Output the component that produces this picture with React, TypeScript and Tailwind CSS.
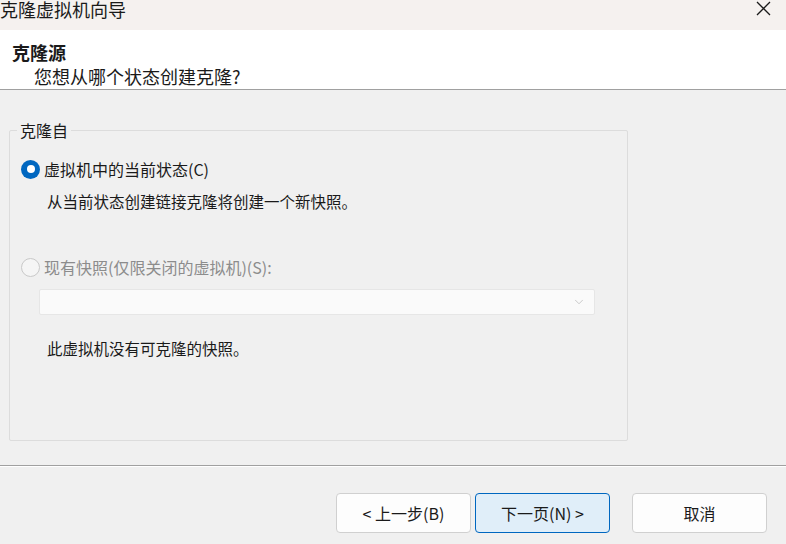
import {ChevronDown} from "lucide-react";

const font = {fontFamily: '"Noto Sans CJK SC", "Noto Sans", sans-serif'};

const Radio = ({checked, disabled}: {checked?: boolean; disabled?: boolean}) => {
    if (checked) {
        return (
            <span className="flex size-[19px] shrink-0 items-center justify-center rounded-full bg-[#0067c0]">
                <span className="size-[8px] rounded-full bg-white"/>
            </span>
        )
    }
    return (
        <span className={`size-[19px] shrink-0 rounded-full border ${disabled ? "border-[#c9c9c9] bg-[#f5f5f5]" : "border-[#8a8a8a] bg-white"}`}/>
    )
}

const WizButton = ({label, primary}: {label: string; primary?: boolean}) => (
    <button
        className={`flex h-[40px] w-[135px] items-center justify-center rounded-[4px] border text-[16px] text-[#1a1a1a] ${primary ? "border-[#0067c0] bg-[#e0eef9]" : "border-[#d0d0d0] bg-[#fdfdfd]"}`}
    >
        {label}
    </button>
)

export default function App() {
    return (
        <div style={font} className="flex h-[544px] w-[786px] flex-col overflow-hidden bg-[#f0f0f0] text-[#1a1a1a]">
            {/* title bar */}
            <div className="flex h-[30px] shrink-0 items-start justify-between bg-[#f5f1ef]">
                <span className="-mt-[3px] text-[18px] leading-[24px]">克隆虚拟机向导</span>
                <svg className="mr-[15px] mt-[1px] size-[15px]" viewBox="0 0 15 15" fill="none" stroke="#1a1a1a" strokeWidth={1.3}>
                    <path d="M1 1 L14 14 M14 1 L1 14"/>
                </svg>
            </div>

            {/* header */}
            <div className="flex h-[59px] shrink-0 flex-col bg-white pl-[12px] pt-[10px]">
                <span className="text-[18px] font-bold leading-[24px]">克隆源</span>
                <span className="pl-[22px] text-[18px] leading-[24px]">您想从哪个状态创建克隆?</span>
            </div>
            <div className="h-px shrink-0 bg-[#a0a0a0]"/>

            {/* body */}
            <div className="flex flex-1 flex-col pl-[9px] pt-[30px]">
                <fieldset className="h-[321px] w-[619px] rounded-[2px] border border-[#dcdcdc] px-[11px]">
                    <legend className="-ml-[4px] px-[3px] text-[16px] leading-[20px]">克隆自</legend>
                    <div className="mt-[18px] flex h-[22px] items-center gap-[4px]">
                        <Radio checked/>
                        <span className="text-[16px] leading-[22px]">虚拟机中的当前状态(C)</span>
                    </div>
                    <div className="mt-[10px] pl-[26px] text-[15.5px] leading-[22px]">从当前状态创建链接克隆将创建一个新快照。</div>

                    <div className="mt-[44px] flex h-[22px] items-center gap-[4px]">
                        <Radio disabled/>
                        <span className="text-[16px] leading-[22px] text-[#8c8c8c]">现有快照(仅限关闭的虚拟机)(S):</span>
                    </div>
                    <div className="ml-[18px] mt-[11px] flex h-[26px] w-[556px] items-center justify-end rounded-[2px] border border-[#e6e6e6] bg-[#fafafa] pr-[8px]">
                        <ChevronDown className="size-[14px] text-[#b4b4b4]" strokeWidth={1.2}/>
                    </div>
                    <div className="mt-[22px] pl-[26px] text-[15.5px] leading-[22px]">此虚拟机没有可克隆的快照。</div>
                </fieldset>

                <div className="-ml-[9px] mt-[24px] h-px bg-[#a0a0a0]"/>
                <div className="-ml-[9px] h-px bg-white"/>

                <div className="-ml-[9px] mt-[26px] flex pr-[19px]">
                    <div className="flex-1"/>
                    <div className="flex gap-[4px]">
                        <WizButton label="< 上一步(B)"/>
                        <WizButton label="下一页(N) >" primary/>
                    </div>
                    <div className="ml-[22px]">
                        <WizButton label="取消"/>
                    </div>
                </div>
            </div>
        </div>
    )
}
